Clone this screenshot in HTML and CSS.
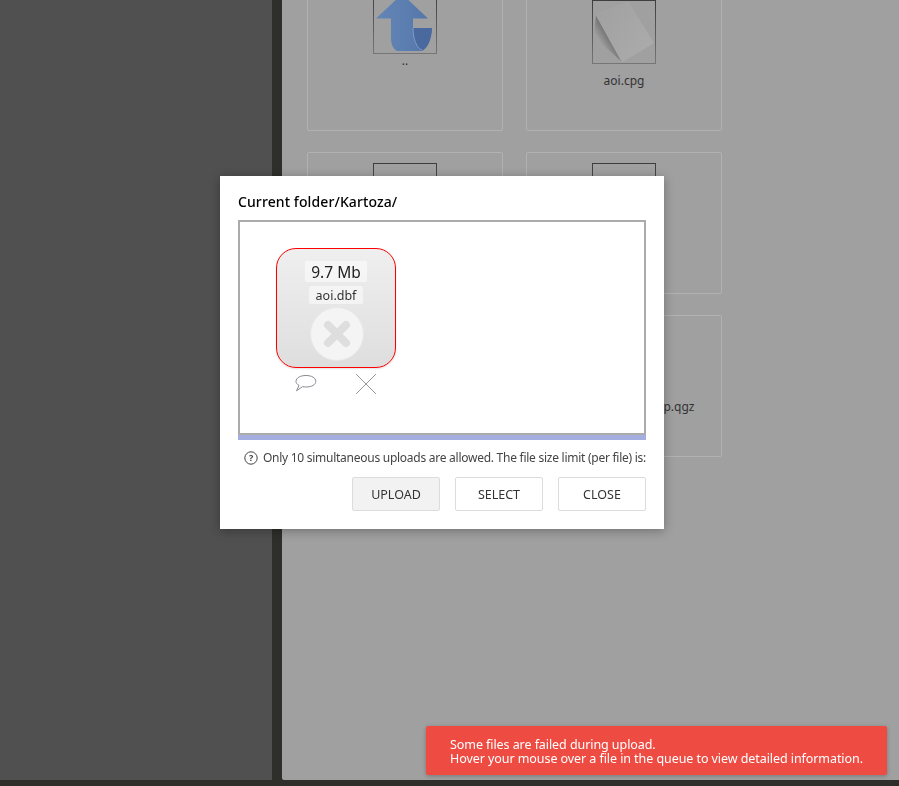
FILE: index.html
```html
<!DOCTYPE html>
<html lang="en">
<head>
<meta charset="utf-8">
<title>Upload</title>
<link rel="stylesheet" href="styles.css">
</head>
<body>
<div class="app">
  <div class="workspace">
    <aside class="sidebar"></aside>
    <main class="browser">
      <div class="file-grid">
        <div class="file-card">
          <div class="thumb thumb-up">
            <svg viewBox="0 0 62 62" width="62" height="62">
              <defs>
                <linearGradient id="up" x1="0" y1="0" x2="1" y2="0">
                  <stop offset="0" stop-color="#6485b5"/><stop offset="0.5" stop-color="#5c7fb1"/><stop offset="1" stop-color="#5373a6"/>
                </linearGradient>
              </defs>
              <path d="M28 3 L54 27.500 L39 27.500 L39 37 L58 37 C57.500 49 53 58 48 60 L23 60 C19 58 17 53 17 47 L17 27.500 L2 27.500 Z" fill="url(#up)"/>
              <path d="M39 37 L58 37 C57.500 49 53 58 48 59 C43 58 39 48 39 37 Z" fill="#4a6a9f"/>
              <path d="M39 37 C39 48 43 58 48 59" fill="none" stroke="#7f9ac4" stroke-width="1"/>
            </svg>
          </div>
          <div class="file-name file-up">..</div>
        </div>
        <div class="file-card">
          <div class="thumb thumb-tall">
            <svg class="doc" viewBox="0 0 62 62" width="62" height="62">
              <defs>
                <linearGradient id="shade1" x1="0" y1="0" x2="1" y2="0.7">
                  <stop offset="0" stop-color="#a0a0a0"/><stop offset="1" stop-color="#ababab"/>
                </linearGradient>
                <linearGradient id="shadow1" gradientUnits="userSpaceOnUse" x1="16" y1="38" x2="8" y2="43">
                  <stop offset="0" stop-color="#787878"/><stop offset="1" stop-color="#a0a0a0"/>
                </linearGradient>
              </defs>
              <path d="M3 14 L29 61 L1 36 Z" fill="url(#shadow1)"/>
              <path d="M3 14 L35 1 L61 42 L29 61 Z" fill="url(#shade1)" stroke="#a8a8a8" stroke-width="0.500"/>
            </svg>
          </div>
          <div class="file-name">aoi.cpg</div>
        </div>
        <div class="file-card">
          <div class="thumb thumb-tall"></div>
          <div class="file-name">aoi.dbf</div>
        </div>
        <div class="file-card">
          <div class="thumb thumb-tall"></div>
          <div class="file-name">aoi.prj</div>
        </div>
        <div class="file-card">
          <div class="thumb thumb-tall"></div>
          <div class="file-name">aoi.qix</div>
        </div>
        <div class="file-card">
          <div class="thumb thumb-tall"></div>
          <div class="file-name">kartoza_project_map.qgz</div>
        </div>
      </div>
    </main>
  </div>
  <div class="footer-bar"></div>
</div>

<section class="upload-dialog">
  <h2 class="dialog-title">Current folder/Kartoza/</h2>
  <div class="queue-wrap">
    <div class="queue">
      <div class="queue-item">
        <div class="tile">
          <span class="tile-size">9.7 Mb</span>
          <span class="tile-name">aoi.dbf</span>
          <span class="tile-status">
            <svg viewBox="0 0 54 54" width="54" height="54">
              <circle cx="27" cy="27" r="26.500" fill="#f4f4f4" stroke="#e8e8e8"/>
              <path d="M18 18 L36 36 M36 18 L18 36" stroke="#dedede" stroke-width="8" stroke-linecap="round"/>
            </svg>
          </span>
        </div>
        <div class="tile-actions">
          <svg viewBox="0 0 22 19" width="22" height="19">
            <path d="M11 2.500 C16.500 2.500 20.800 4.800 20.800 8.300 C20.800 11.800 16.500 14 11 14 C9.800 14 8.600 13.900 7.600 13.600 L1.500 17.800 L4 12.400 C2 11.400 1 10 1 8.300 C1 4.800 5.500 2.500 11 2.500 Z" fill="none" stroke="#8a8a94" stroke-width="1"/>
          </svg>
          <svg viewBox="0 0 22 22" width="22" height="22">
            <path d="M1 1 L21 21 M21 1 L1 21" stroke="#96969c" stroke-width="1" fill="none"/>
          </svg>
        </div>
      </div>
    </div>
    <div class="progress"></div>
  </div>
  <p class="limit-note">
    <svg class="help-icon" viewBox="0 0 14 14" width="14" height="14">
      <circle cx="7" cy="7" r="6.200" fill="none" stroke="#444" stroke-width="1"/>
      <text x="7" y="10" text-anchor="middle" class="help-mark">?</text>
    </svg>
    <span>Only 10 simultaneous uploads are allowed. The file size limit (per file) is:</span>
  </p>
  <div class="dialog-actions">
    <button class="btn btn-active" type="button">UPLOAD</button>
    <button class="btn" type="button">SELECT</button>
    <button class="btn" type="button">CLOSE</button>
  </div>
</section>

<div class="toast">
  Some files are failed during upload.<br>
  Hover your mouse over a file in the queue to view detailed information.
</div>
</body>
</html>
```

FILE: styles.css
```css
* { box-sizing: border-box; }
html, body { margin: 0; height: 100%; }
body {
  background: #2e2e2a;
  font-family: "Noto Sans", "Open Sans", sans-serif;
  color: #333;
  overflow: hidden;
}
.app { height: 786px; display: flex; flex-direction: column; }
.workspace { flex: 1; display: flex; gap: 10px; min-height: 0; }
.sidebar { width: 272px; background: #505050; }
.browser {
  flex: 1;
  background: #a0a0a0;
  overflow: hidden;
  padding-left: 25px;
  border-bottom-left-radius: 2px;
}
.footer-bar { height: 6px; background: #2e2e2a; }

.file-grid {
  display: grid;
  grid-template-columns: 196px 196px;
  grid-auto-rows: 142px;
  column-gap: 23px;
  row-gap: 21px;
  margin-top: -11px;
}
.file-card {
  border: 1px solid #b2b2b2;
  border-radius: 2px;
  display: flex;
  flex-direction: column;
  align-items: center;
  padding-top: 10px;
}
.thumb {
  width: 64px;
  height: 64px;
  border: 1px solid;
  border-image: linear-gradient(#3d3d3d, #767676) 1;
  overflow: hidden;
  flex: none;
}
.thumb-up { margin-top: -10px; }
.thumb-up svg, .doc { display: block; }
.file-name {
  font-size: 12px;
  line-height: 16px;
  margin-top: 9px;
  color: #333;
  white-space: nowrap;
}
.file-up { margin-top: -1px; }

.upload-dialog {
  position: fixed;
  left: 220px;
  top: 176px;
  width: 444px;
  height: 353px;
  background: #fff;
  box-shadow: 0 2px 10px rgba(0, 0, 0, 0.3);
  padding: 17px 18px 0;
  display: flex;
  flex-direction: column;
}
.dialog-title {
  margin: 0;
  font-size: 14px;
  line-height: 18px;
  font-weight: 500;
  letter-spacing: 0.1px;
  color: #000;
}
.queue-wrap { margin-top: 9px; }
.queue {
  height: 215px;
  border: 2px solid #ababab;
  padding: 26px 36px;
}
.progress { height: 5px; background: #a5afdf; }
.queue-item { width: 120px; }
.tile {
  width: 120px;
  height: 120px;
  border: 1px solid #f00;
  border-radius: 20px;
  background: linear-gradient(#efefef, #dedede);
  box-shadow: 0 1px 2px rgba(0, 0, 0, 0.12);
  display: flex;
  flex-direction: column;
  align-items: center;
  padding-top: 12px;
}
.tile-size {
  font-size: 15.500px;
  line-height: 20px;
  padding: 1px 6px 0;
  background: rgba(255, 255, 255, 0.5);
  border-radius: 2px;
  color: #222;
}
.tile-name {
  font-size: 12.500px;
  line-height: 17px;
  margin-top: 4px;
  padding: 1px 7px 0;
  background: rgba(255, 255, 255, 0.5);
  border-radius: 2px;
  color: #333;
}
.tile-status { display: block; height: 54px; margin: 3px 0 0 2px; }
.tile-status svg { display: block; }
.tile-actions {
  display: flex;
  align-items: flex-start;
  gap: 38px;
  padding: 5px 0 0 19px;
}
.tile-actions svg { display: block; }

.limit-note {
  margin: 9px 0 0;
  display: flex;
  align-items: center;
  justify-content: flex-end;
  gap: 5px;
  font-size: 12px;
  line-height: 18px;
  letter-spacing: -0.26px;
  color: #444;
  white-space: nowrap;
}
.help-icon { flex: none; }
.help-mark { font-size: 9px; font-weight: 700; fill: #444; }
.dialog-actions {
  display: flex;
  justify-content: flex-end;
  gap: 15px;
  margin-top: 10px;
}
.btn {
  width: 88px;
  height: 34px;
  padding: 0;
  background: #fff;
  border: 1px solid #dcdcdc;
  border-radius: 2px;
  font: 12.500px "Noto Sans", "Open Sans", sans-serif;
  color: #333;
}
.btn-active { background: #f2f2f2; }

.toast {
  position: fixed;
  left: 426px;
  top: 726px;
  width: 461px;
  height: 49px;
  padding: 12px 0 0 24px;
  background: #ee4c43;
  border-radius: 2px;
  box-shadow: 0 1px 4px rgba(0, 0, 0, 0.25);
  color: #fff;
  font-size: 12.500px;
  line-height: 14px;
  letter-spacing: -0.07px;
  white-space: nowrap;
}
```
